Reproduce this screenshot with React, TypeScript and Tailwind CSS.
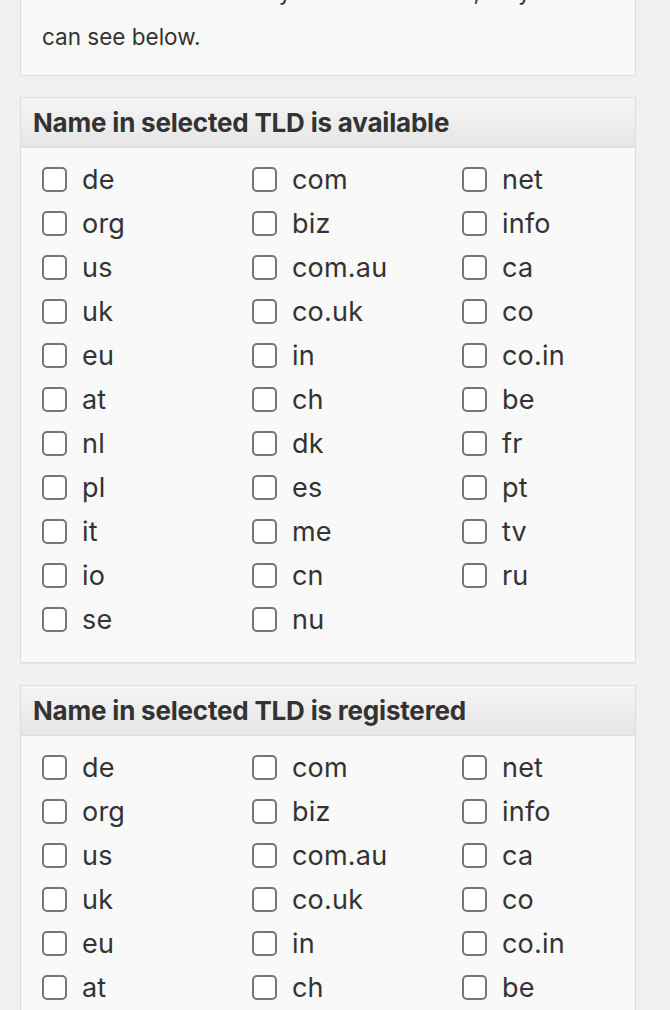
import React from "react";

const tlds = [
  "de", "com", "net",
  "org", "biz", "info",
  "us", "com.au", "ca",
  "uk", "co.uk", "co",
  "eu", "in", "co.in",
  "at", "ch", "be",
  "nl", "dk", "fr",
  "pl", "es", "pt",
  "it", "me", "tv",
  "io", "cn", "ru",
  "se", "nu",
];

const font = { fontFamily: "Inter, 'Noto Sans', sans-serif" };

function Box() {
  return (
    <span className="block w-[25px] h-[25px] shrink-0 rounded-[5px] border-2 border-[#767676] bg-white" />
  );
}

function Panel({ title }: { title: string }) {
  return (
    <div className="border border-[#dddddd] bg-[#f9f9f9] shadow-[0_1px_1px_rgba(0,0,0,0.04)]">
      <div className="h-[50px] flex items-center pl-[12px] border-b border-[#dddddd] bg-gradient-to-b from-[#f5f5f5] to-[#e6e6e6]">
        <span className="text-[26px] font-bold text-[#333333] tracking-[-0.2px]">{title}</span>
      </div>
      <div className="grid grid-cols-[210px_210px_210px] pl-[21px] pt-[9px] pb-[21px]">
        {tlds.map((t) => (
          <label key={t} className="h-[44px] flex items-center gap-[15px]">
            <Box />
            <span className="text-[27px] text-[#333333] leading-none tracking-[0.2px]">{t}</span>
          </label>
        ))}
      </div>
    </div>
  );
}

export default function App() {
  return (
    <div className="min-h-screen bg-[#f1f1f1] overflow-hidden" style={font}>
      <div className="w-[616px] ml-[20px] flex flex-col mt-[-32px]">
        <div className="border border-[#dddddd] bg-[#f9f9f9] px-[21px] pb-[16px] text-[22.5px] text-[#333333] leading-[45px]">
          <p className="whitespace-nowrap overflow-hidden">Choose the TLDs that you want to watch, so you</p>
          <p>can see below.</p>
        </div>
        <div className="mt-[21px]">
          <Panel title="Name in selected TLD is available" />
        </div>
        <div className="mt-[22px]">
          <Panel title="Name in selected TLD is registered" />
        </div>
      </div>
    </div>
  );
}
